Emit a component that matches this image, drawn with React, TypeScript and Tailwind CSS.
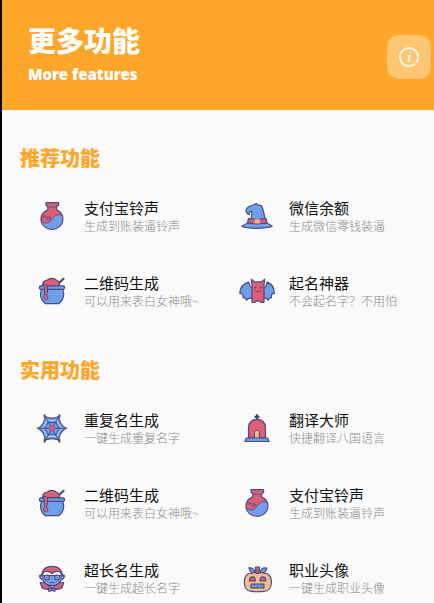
import React from "react";

const PINK = "#dd5f77";
const BLUE = "#6f9fea";
const LINE = "#4a4a7c";
const TAN = "#f3bd92";

function IconBase({ children }: { children: React.ReactNode }) {
  return (
    <svg
      viewBox="0 0 36 36"
      className="size-9 shrink-0"
      fill="none"
      stroke={LINE}
      strokeWidth="1.2"
      strokeLinecap="round"
      strokeLinejoin="round"
      aria-hidden="true"
    >
      {children}
    </svg>
  );
}

function PotionIcon() {
  return (
    <IconBase>
      <path
        fill={PINK}
        d="M12 4.7h12.6v2.6l-2 1.4v3.2c3.7 1.6 6.3 5 6.3 9.2 0 5.8-4.7 10.2-10.9 10.2S7 26.9 7 21.1c0-4.2 2.600-7.6 6.8-9.200V8.700l-1.800-1.400z"
      />
      <path
        fill={BLUE}
        stroke="none"
        d="M8 24.300c3 1.300 6.600 1 8.500-1.300 2-2.500 3.500-5.800 7.500-6.300 1.700-.2 3 .2 4 1 1.600 7-3.200 13-10 13-5 0-8.800-2.700-10-6.400z"
      />
      <path d="M8 24.300c3 1.300 6.600 1 8.500-1.300 2-2.500 3.500-5.800 7.500-6.300 1.700-.2 3 .2 4 1" strokeWidth=".8" />
      <path d="M13.500 9.200h9" strokeWidth=".7" />
      <circle cx="10.500" cy="18.500" r="1" strokeWidth=".9" />
      <circle cx="14.500" cy="20" r="1.500" strokeWidth=".9" />
    </IconBase>
  );
}

function CauldronIcon() {
  return (
    <IconBase>
      <path d="M29.500 5.800 24 11" strokeWidth="2.200" />
      <path fill={PINK} d="M8.700 13c-.5-3.800 1.800-5.600 4.800-6C15.500 4.900 20 4.700 22 7c2.500.5 3.700 2.500 3.700 6z" />
      <path
        fill={BLUE}
        d="M8 16h20.500c.8 1.500 1.200 3.200 1.200 5 0 4-2 7.500-5 9.700H11.500c-3-2.200-5-5.700-5-9.700 0-1.800.5-3.500 1.500-5z"
      />
      <rect x="5.500" y="12.800" width="25" height="3.500" rx="1.200" fill={BLUE} />
      <path
        fill={PINK}
        strokeWidth="1"
        d="M9.500 11.500c2.500-.6 4 .2 4 2.500v5c0 1.300-.9 1.300-.9 2.500s1.400 2 1.400 3.300c0 1.200-.9 2-2.200 2s-2.200-.8-2.200-2c0-1.500 1-1.800 1-3.500v-5.500z"
      />
    </IconBase>
  );
}

function HatIcon() {
  return (
    <IconBase>
      <path
        fill={BLUE}
        d="M10 24.500c-2.500.8-5 2-7.200 3.800C8 31 28 31 33.200 28.300c-1.900-1.900-4.300-3-7-3.800z"
      />
      <path
        fill={BLUE}
        d="M11.200 25c1-4 1.700-7.500 1.600-11.500-2-.3-2.900.7-2.500 3.200-2.600-.5-3.800-3-2.800-5.700C8.800 7.300 14 8 17.500 5.500l.8 1.400 4.200.8c2.500 5 3 11.400 4.200 17.300z"
      />
      <path fill={PINK} d="M9.500 20.500c4 1 13 1 17.500 0l1 4.200c-5 1.500-14 1.500-19.500 0z" />
      <rect x="15.500" y="21" width="5.500" height="4.500" fill={TAN} stroke={PINK} strokeWidth=".8" />
    </IconBase>
  );
}

function BatIcon() {
  return (
    <IconBase>
      <path
        fill={BLUE}
        d="M13.500 15c-2-.5-3.200-2-3.500-5.800C4.500 10.500 1 14.500.8 20.500c1.500-.2 2.500.1 3 1.200.4.900.3 2 .3 3 1.800-.4 2.800.6 3.400 2.600 1-1.800 3.500-2.600 6-1.800z"
      />
      <path
        fill={BLUE}
        d="M24.500 15c2-.5 3.200-2 3.500-5.800 4.500 1.300 7.200 5.300 7.400 11.300-1.500-.2-2.200.1-2.700 1.200-.4.900-.3 2-.3 3-1.800-.4-2.500.6-3.100 2.600-1-1.800-2.500-2.600-4.800-1.800z"
      />
      <path
        fill={PINK}
        d="M13 12 12.300 6.200l3.200 2.700h7l3.200-2.700L25 12v17.300h-3l-1.400-1.200h-3.200L16 29.300h-3z"
      />
      <path d="M16.200 14.500v.2M21.800 14.500v.2" strokeWidth="1.700" />
      <path d="M16.300 17.800c1 1.400 4.400 1.400 5.400 0" strokeWidth="1" />
    </IconBase>
  );
}

function WebIcon() {
  return (
    <IconBase>
      <path
        fill={BLUE}
        d="M11.200 6.500c4 2 9.600 2 13.600 0 .2 5 2.500 8.800 7 11.800-4.500 3-6.800 7-7 12-4-2-9.600-2-13.600 0-.2-5-2.500-9-7-12 4.500-3 6.800-6.800 7-11.800z"
      />
      <path
        stroke="#b5cff8"
        strokeWidth="1"
        d="M12.700 9.800c3.300 1.200 7.300 1.200 10.600 0 .6 3.700 2.200 6.400 5 8.500-2.800 2.200-4.400 5-5 8.700-3.300-1.200-7.300-1.200-10.600 0-.6-3.700-2.200-6.500-5-8.700 2.800-2.100 4.400-4.800 5-8.500z"
      />
      <path
        strokeWidth=".9"
        d="M14 12c2.600.8 5.400.8 8 0 .5 2.700 1.700 4.700 3.500 6.300-1.800 1.700-3 3.700-3.500 6.500-2.600-.8-5.400-.8-8 0-.5-2.800-1.700-4.800-3.500-6.500 1.800-1.600 3-3.600 3.500-6.300z"
      />
      <path d="m10.500 5 15 26.800M25.500 5l-15 26.800M3 18.300h30" strokeWidth="1" />
      <path d="M10.500 5.200v1.600M25.500 5.200v1.600M10.500 30v1.800M25.500 30v1.800" strokeWidth="1.800" />
      <circle cx="18" cy="18.300" r="2.600" fill={PINK} stroke="#a8487a" strokeWidth="1" />
    </IconBase>
  );
}

function CryptIcon() {
  return (
    <IconBase>
      <path d="M18 5v5M16.400 6.800h3.200" strokeWidth="2.200" />
      <path fill={PINK} d="M9.500 28V17.500c0-5 3.700-8.200 8.500-8.200s8.500 3.200 8.500 8.200V28z" />
      <path fill={TAN} strokeWidth="1" d="M15.500 28v-5.500c0-3 4.800-3 4.800 0V28z" />
      <path fill={BLUE} d="M7.500 28h21l1.700 3.500H5.800z" />
    </IconBase>
  );
}

function VampireIcon() {
  return (
    <IconBase>
      <path fill={PINK} d="m6.200 22.500 5 .5 6.800 5 6.800-5 5-.5-2.300 6-5 .8H13.500l-5-.8z" />
      <path
        fill={BLUE}
        d="M8 15.500c-1.500-1.300-2.500-.8-2.300.8.2 2 1.200 3.300 2.900 3.400 1.600 3.600 5.100 6 9.400 6s7.800-2.400 9.400-6c1.700-.1 2.700-1.400 2.900-3.400.2-1.600-.8-2.100-2.300-.8z"
      />
      <path
        fill={PINK}
        d="M8 16.500C7 10.300 11.200 6.300 18 6.300s11 4 10 10.200c-.5-3-1.700-4.800-4-5-2.300-.2-4.500.4-6 2-1.500-1.600-3.700-2.200-6-2-2.300.2-3.500 2-4 5z"
      />
      <circle cx="12.800" cy="17.500" r="2.500" fill="#9db7ea" />
      <circle cx="23.200" cy="17.500" r="2.500" fill="#9db7ea" />
      <path d="M12.900 17.500h.1M23 17.500h.1" strokeWidth="1.600" />
      <path d="M16 22.500h4" strokeWidth=".9" />
      <path fill={BLUE} strokeWidth="1" d="m15 28 3 1.500 3-1.500v3.500l-3-1-3 1z" />
    </IconBase>
  );
}

function PumpkinIcon() {
  return (
    <IconBase>
      <path fill={BLUE} d="M16 13c-4 .2-5.800-1.800-6-5.500 3.700.3 5.800 2 6 5.500zM21 13c.3-3.500 2.500-5.300 6.800-5-.4 3.500-2.700 5.200-6.800 5z" />
      <path
        fill={TAN}
        d="M18.500 13.500c2.500-1.500 5-1.300 6.500-.2 4.500-.6 7.400 3.400 7.400 8.700 0 5.700-3 9.300-7.400 9.300-4 .6-8 .6-12.500 0C8 31.300 5.300 27.700 5.300 22c0-5.300 3-9.300 7.200-8.700 2-1.100 4-1.200 6 .2z"
      />
      <path fill={PINK} d="M16.500 7h4l-.5 6.500h-3z" />
      <path fill={PINK} d="M10.500 20.800c0-2.500 1.300-3.900 3-3.900s2.800 1.400 2.800 3.900zM21 20.800c0-2.500 1.200-3.900 2.900-3.900s3 1.400 3 3.900z" />
      <path fill={BLUE} d="M12 24h13v3.800H12z" />
      <path d="M15 24v1.500M18.500 26.300v1.500M22 24v1.500" strokeWidth=".8" />
    </IconBase>
  );
}

interface Feature {
  title: string;
  desc: string;
  icon: React.ReactNode;
}

const recommended: Feature[] = [
  { title: "支付宝铃声", desc: "生成到账装逼铃声", icon: <PotionIcon /> },
  { title: "微信余额", desc: "生成微信零钱装逼", icon: <HatIcon /> },
  { title: "二维码生成", desc: "可以用来表白女神哦~", icon: <CauldronIcon /> },
  { title: "起名神器", desc: "不会起名字？不用怕", icon: <BatIcon /> },
];

const practical: Feature[] = [
  { title: "重复名生成", desc: "一键生成重复名字", icon: <WebIcon /> },
  { title: "翻译大师", desc: "快捷翻译八国语言", icon: <CryptIcon /> },
  { title: "二维码生成", desc: "可以用来表白女神哦~", icon: <CauldronIcon /> },
  { title: "支付宝铃声", desc: "生成到账装逼铃声", icon: <PotionIcon /> },
  { title: "超长名生成", desc: "一键生成超长名字", icon: <VampireIcon /> },
  { title: "职业头像", desc: "一键生成职业头像", icon: <PumpkinIcon /> },
];

function FeatureItem({ title, desc, icon }: Feature) {
  return (
    <li>
      <button type="button" className="flex w-full gap-3.5 pt-[18px] pr-1 pb-[21px] pl-2.5 text-left">
        {icon}
        <span className="min-w-0 whitespace-nowrap">
          <span className="block text-[15px] leading-5 text-[#111111]">{title}</span>
          <span className="block text-xs leading-4 font-light text-[#8a8a8a]">{desc}</span>
        </span>
      </button>
    </li>
  );
}

function FeatureSection({ heading, items }: { heading: string; items: Feature[] }) {
  return (
    <section>
      <h2 className="pl-[18px] text-xl leading-7 font-black text-[#fea629]">{heading}</h2>
      <ul className="mt-2 grid grid-cols-2 pl-[22px]">
        {items.map((item) => (
          <FeatureItem key={item.title} {...item} />
        ))}
      </ul>
    </section>
  );
}

export default function App() {
  return (
    <div className="h-screen overflow-hidden border-l-2 border-black bg-[#fafafa] font-['Noto_Sans_CJK_SC',sans-serif]">
      <header className="flex items-start justify-between bg-[#fea629] pt-5 pr-[3px] pb-6 pl-[26px] text-white">
        <div>
          <h1 className="text-[28px] leading-10 font-black">更多功能</h1>
          <p className="mt-0.5 font-['Noto_Sans',sans-serif] text-[15px] leading-6 font-black">More features</p>
        </div>
        <button
          type="button"
          aria-label="关于"
          className="mt-[15px] flex size-11 items-center justify-center rounded-xl bg-white/35"
        >
          <svg viewBox="0 0 22 22" className="size-[22px]" fill="none" stroke="#fff8ea" strokeLinecap="round">
            <path d="M16.500 18.200A9 9 0 1 1 20 11c0 1.800-.5 3.400-1.300 4.700" strokeWidth="1.900" />
            <path d="M10.200 9.800h1.500l-1.400 5.400h1.300" strokeWidth="1.700" strokeLinejoin="round" />
            <path d="M12.300 6.600v.1" strokeWidth="2.200" />
          </svg>
        </button>
      </header>
      <main className="flex flex-col gap-[26px] pt-[34px]">
        <FeatureSection heading="推荐功能" items={recommended} />
        <FeatureSection heading="实用功能" items={practical} />
      </main>
    </div>
  );
}
